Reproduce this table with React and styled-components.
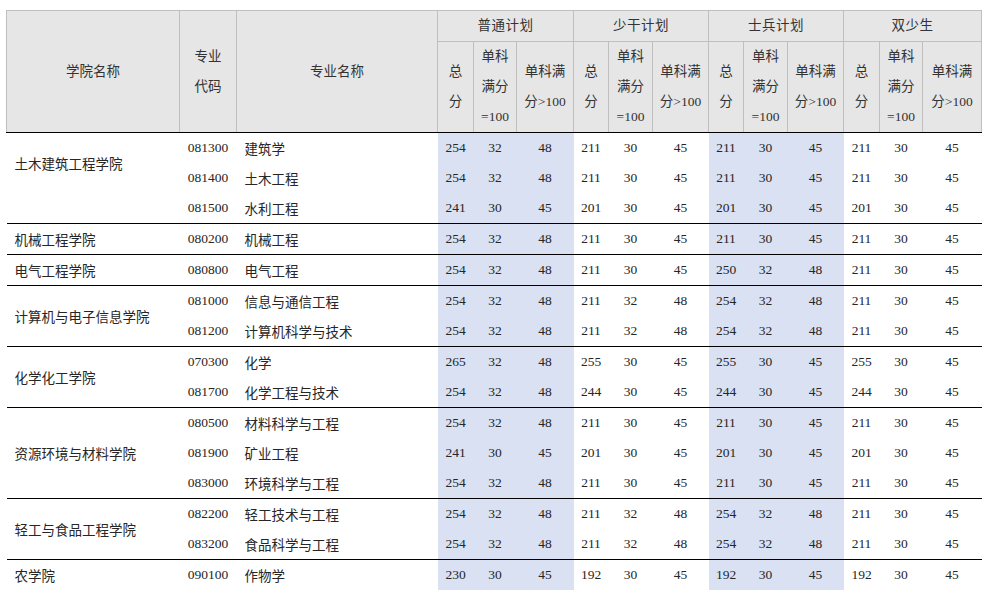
import React from "react";
import styled, { createGlobalStyle } from "styled-components";

const GlobalStyle = createGlobalStyle`
  html, body {
    margin: 0;
    padding: 0;
    background: #fff;
  }
  body {
    font-family: "Liberation Serif", "Noto Sans CJK SC", serif;
    color: #262626;
  }
`;

const widths = [173, 57, 201, 36, 43, 57, 35, 44, 56, 35, 44, 56, 36, 43, 59];

const plans = ["普通计划", "少干计划", "士兵计划", "双少生"];

const colleges = [
  {
    name: "土木建筑工程学院",
    raised: true,
    rows: [
      ["081300", "建筑学", [254, 32, 48, 211, 30, 45, 211, 30, 45, 211, 30, 45]],
      ["081400", "土木工程", [254, 32, 48, 211, 30, 45, 211, 30, 45, 211, 30, 45]],
      ["081500", "水利工程", [241, 30, 45, 201, 30, 45, 201, 30, 45, 201, 30, 45]],
    ],
  },
  {
    name: "机械工程学院",
    rows: [["080200", "机械工程", [254, 32, 48, 211, 30, 45, 211, 30, 45, 211, 30, 45]]],
  },
  {
    name: "电气工程学院",
    rows: [["080800", "电气工程", [254, 32, 48, 211, 30, 45, 250, 32, 48, 211, 30, 45]]],
  },
  {
    name: "计算机与电子信息学院",
    rows: [
      ["081000", "信息与通信工程", [254, 32, 48, 211, 32, 48, 254, 32, 48, 211, 30, 45]],
      ["081200", "计算机科学与技术", [254, 32, 48, 211, 32, 48, 254, 32, 48, 211, 30, 45]],
    ],
  },
  {
    name: "化学化工学院",
    rows: [
      ["070300", "化学", [265, 32, 48, 255, 30, 45, 255, 30, 45, 255, 30, 45]],
      ["081700", "化学工程与技术", [254, 32, 48, 244, 30, 45, 244, 30, 45, 244, 30, 45]],
    ],
  },
  {
    name: "资源环境与材料学院",
    rows: [
      ["080500", "材料科学与工程", [254, 32, 48, 211, 30, 45, 211, 30, 45, 211, 30, 45]],
      ["081900", "矿业工程", [241, 30, 45, 201, 30, 45, 201, 30, 45, 201, 30, 45]],
      ["083000", "环境科学与工程", [254, 32, 48, 211, 30, 45, 211, 30, 45, 211, 30, 45]],
    ],
  },
  {
    name: "轻工与食品工程学院",
    rows: [
      ["082200", "轻工技术与工程", [254, 32, 48, 211, 32, 48, 254, 32, 48, 211, 30, 45]],
      ["083200", "食品科学与工程", [254, 32, 48, 211, 32, 48, 254, 32, 48, 211, 30, 45]],
    ],
  },
  {
    name: "农学院",
    last: true,
    rows: [["090100", "作物学", [230, 30, 45, 192, 30, 45, 192, 30, 45, 192, 30, 45]]],
  },
];

const App = () => {
  return (
    <>
      <GlobalStyle />
      <Table>
        <colgroup>
          {widths.map((w, i) => (
            <col key={i} style={{ width: w }} />
          ))}
        </colgroup>
        <thead>
          <tr>
            <HeadCell rowSpan={2} $bottom>学院名称</HeadCell>
            <HeadCell rowSpan={2} $bottom>专业<br />代码</HeadCell>
            <HeadCell rowSpan={2} $bottom>专业名称</HeadCell>
            {plans.map((p) => (
              <PlanCell key={p} colSpan={3}>{p}</PlanCell>
            ))}
          </tr>
          <SubRow>
            {plans.map((p) => (
              <React.Fragment key={p}>
                <HeadCell $bottom>总<br />分</HeadCell>
                <HeadCell $bottom>单科<br />满分<br />=100</HeadCell>
                <HeadCell $bottom>单科满<br />分&gt;100</HeadCell>
              </React.Fragment>
            ))}
          </SubRow>
        </thead>
        <tbody>
          {colleges.map((c) =>
            c.rows.map((r, i) => {
              const end = i === c.rows.length - 1 && !c.last;
              return (
                <Row key={r[0]}>
                  {i === 0 && (
                    <CollegeCell rowSpan={c.rows.length} $end={!c.last} $raised={c.raised}>
                      {c.name}
                    </CollegeCell>
                  )}
                  <Cell $end={end}>{r[0]}</Cell>
                  <MajorCell $end={end}>{r[1]}</MajorCell>
                  {r[2].map((v, j) => (
                    <Cell key={j} $end={end} $blue={Math.floor(j / 3) % 2 === 0}>
                      {v}
                    </Cell>
                  ))}
                </Row>
              );
            })
          )}
        </tbody>
      </Table>
    </>
  );
};

const Table = styled.table`
  margin: 10px 0 0 6px;
  width: 975px;
  table-layout: fixed;
  border-collapse: collapse;
  font-size: 13.5px;
`;

const HeadCell = styled.th`
  background: #e6e6e6;
  border: 1px solid #bfbfbf;
  border-bottom: 1px solid ${(p) => (p.$bottom ? "#000" : "#bfbfbf")};
  font-weight: normal;
  color: #333;
  line-height: 30px;
  padding: 0;
  text-align: center;
  vertical-align: middle;
`;

const PlanCell = styled(HeadCell)`
  height: 30px;
  letter-spacing: 0.5px;
`;

const SubRow = styled.tr`
  height: 91px;
`;

const Row = styled.tr`
  height: 30px;
`;

const Cell = styled.td`
  padding: 0;
  height: 30px;
  text-align: center;
  vertical-align: middle;
  white-space: nowrap;
  background: ${(p) => (p.$blue ? "#d9e1f2" : "transparent")};
  border-bottom: ${(p) => (p.$end ? "1px solid #000" : "none")};
`;

const MajorCell = styled(Cell)`
  text-align: left;
  padding-left: 8px;
`;

const CollegeCell = styled(Cell)`
  text-align: left;
  padding-left: 8px;
  padding-bottom: ${(p) => (p.$raised ? "30px" : "0")};
`;

export default App;
